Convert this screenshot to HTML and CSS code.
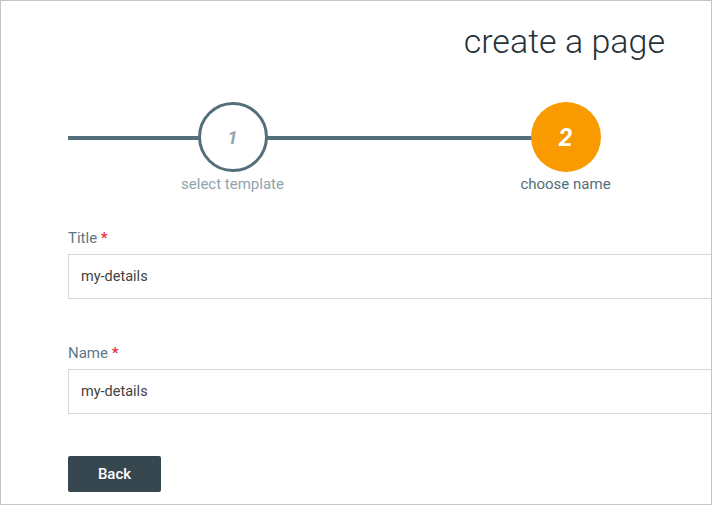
FILE: index.html
```html
<!DOCTYPE html>
<html>
<head>
<meta charset="utf-8">
<link rel="stylesheet" href="styles.css">
</head>
<body>
<div class="frame">
  <header class="header">
    <h1 class="page-title">create a page</h1>
  </header>
  <div class="stepper">
    <div class="step step-done">
      <div class="circle"><span class="num">1</span></div>
      <div class="step-label">select template</div>
    </div>
    <div class="step step-active">
      <div class="circle"><span class="num">2</span></div>
      <div class="step-label">choose name</div>
    </div>
  </div>
  <form class="form">
    <div class="field">
      <label class="label">Title <span class="req">*</span></label>
      <input class="input" type="text" value="my-details">
    </div>
    <div class="field">
      <label class="label">Name <span class="req">*</span></label>
      <input class="input" type="text" value="my-details">
    </div>
    <button type="button" class="btn">Back</button>
  </form>
</div>
</body>
</html>
```
FILE: styles.css
```css
* { box-sizing: border-box; }
html, body { margin: 0; padding: 0; background: #fff; }
body { font-family: Roboto, "Liberation Sans", sans-serif; }

.frame {
  width: 712px;
  height: 505px;
  border: 1px solid #c4c4c4;
  overflow: hidden;
  background: #fff;
}

.header {
  display: flex;
  justify-content: flex-end;
  padding: 20px 46px 0 0;
}
.page-title {
  margin: 0;
  font-size: 34px;
  line-height: 40px;
  font-weight: 300;
  color: #263238;
}

.stepper {
  position: relative;
  display: grid;
  grid-template-columns: 333px 333px;
  margin: 41px 0 0 65px;
}
.stepper::before {
  content: "";
  position: absolute;
  left: 2px;
  top: 34px;
  width: 498px;
  height: 4px;
  background: #546e7a;
}
.step {
  display: flex;
  flex-direction: column;
  align-items: center;
}
.circle {
  position: relative;
  z-index: 1;
  width: 70px;
  height: 70px;
  border-radius: 50%;
  display: flex;
  align-items: center;
  justify-content: center;
}
.step-done .circle {
  background: #fff;
  border: 3px solid #546e7a;
}
.step-active .circle {
  background: #f89a00;
}
.num {
  font-style: italic;
  font-weight: 700;
}
.step-done .num { font-size: 18px; color: #90a4ae; }
.step-active .num { font-size: 25px; color: #fff; }
.step-label {
  margin-top: 4px;
  font-size: 15px;
  line-height: 16px;
  font-weight: 400;
}
.step-done .step-label { color: #90a4ae; }
.step-active .step-label { color: #546e7a; }

.form {
  margin: 38px 0 0 67px;
}
.field {
  display: flex;
  flex-direction: column;
  align-items: flex-start;
  margin-bottom: 46px;
}
.field + .field { margin-bottom: 42px; }
.label {
  font-size: 15px;
  line-height: 16px;
  font-weight: 400;
  color: #5b7989;
  margin-bottom: 8px;
}
.req { color: #e8334a; font-weight: 700; }
.input {
  width: 720px;
  height: 45px;
  border: 1px solid #cfd8dc;
  border-radius: 0;
  padding: 0 12px;
  font-family: Roboto, "Liberation Sans", sans-serif;
  font-size: 14.5px;
  color: #424242;
  outline: none;
  background: #fff;
}
.btn {
  display: block;
  width: 93px;
  height: 36px;
  border: none;
  border-radius: 2px;
  background: #37474f;
  color: #fff;
  font-family: Roboto, "Liberation Sans", sans-serif;
  font-size: 15px;
  font-weight: 500;
  cursor: pointer;
}
```
